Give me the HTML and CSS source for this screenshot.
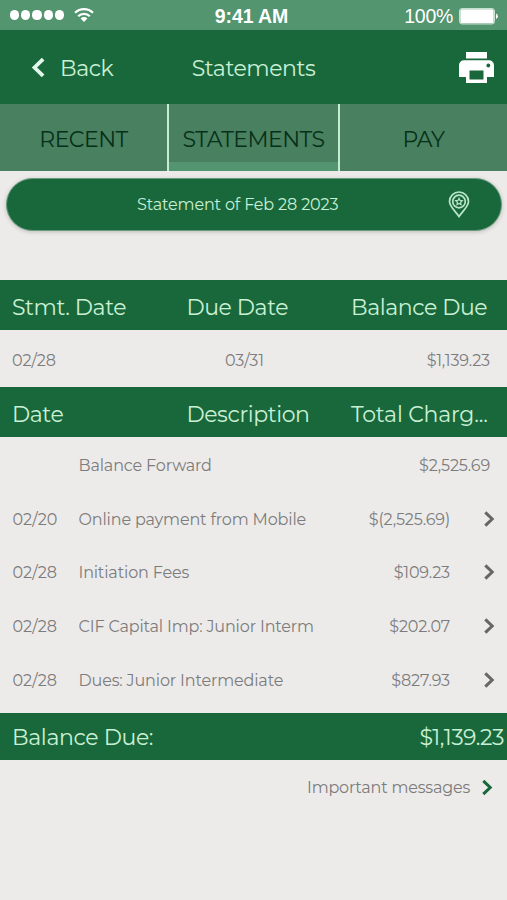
FILE: index.html
```html
<!DOCTYPE html>
<html lang="en">
<head>
<meta charset="utf-8">
<title>Statements</title>
<link rel="stylesheet" href="styles.css">
</head>
<body>
<svg class="defs" width="0" height="0" aria-hidden="true">
  <symbol id="chevron" viewBox="0 0 12 18"><path d="M2.300 2.300 9.200 9l-6.900 6.700" fill="none" stroke="currentColor" stroke-width="3"/></symbol>
</svg>
<div class="status">
  <div class="signal"><i></i><i></i><i></i><i></i><i></i>
    <svg class="wifi" width="20" height="16" viewBox="0 0 20 16"><g fill="none" stroke="#fff" stroke-width="2.200"><path d="M1 5.800a12.800 12.800 0 0 1 18 0"/><path d="M4.200 9.200a8.200 8.200 0 0 1 11.600 0"/></g><path d="M6.600 11.400a4.800 4.800 0 0 1 6.800 0L10 14.900z" fill="#fff"/></svg>
  </div>
  <div class="clock">9:41 AM</div>
  <div class="power"><span>100%</span>
    <svg width="40" height="17" viewBox="0 0 40 17"><rect x=".5" y=".5" width="35" height="15.500" rx="2.500" fill="none" stroke="#c5e2d1"/><rect x="1.300" y="1.300" width="33.400" height="14" rx="1.500" fill="#fff"/><path d="M37 5.500a3 3 0 0 1 0 5.500z" fill="#fff"/></svg>
  </div>
</div>
<header class="nav">
  <div class="back"><svg class="left" width="15" height="23"><use href="#chevron"/></svg><span>Back</span></div>
  <h1>Statements</h1>
  <svg class="print" width="35" height="32" viewBox="0 0 35 32"><path d="M7 0h21v6.500H7z" fill="#fff"/><path d="M5 8.200h25a5 5 0 0 1 5 5V25h-7v6H7v-6H0V13.200a5 5 0 0 1 5-5z" fill="#fff"/><path d="M10.500 18.500h14v9h-14z" fill="#19683b"/><circle cx="29.300" cy="13.500" r="1.900" fill="#19683b"/></svg>
</header>
<nav class="tabs">
  <div class="tab">RECENT</div>
  <div class="tab active">STATEMENTS</div>
  <div class="tab">PAY</div>
</nav>
<main>
  <div class="pill"><span>Statement of Feb 28 2023</span>
    <svg class="pin" width="22" height="27" viewBox="0 0 22 27"><g fill="none" stroke="#b9e5c8" stroke-width="1.700"><path d="M11 25.500C8 21 1.500 15.500 1.500 10.500a9.500 9.500 0 0 1 19 0C20.500 15.500 14 21 11 25.500z"/><circle cx="11" cy="10.500" r="6.300"/><path d="m11 7.300 1 2.100 2.300.3-1.700 1.600.4 2.300-2-1.100-2 1.100.4-2.300-1.700-1.600 2.300-.3z" stroke-width="1.200"/></g></svg>
  </div>
  <section class="head"><span>Stmt. Date</span><span>Due Date</span><span>Balance Due</span></section>
  <section class="summary"><span>02/28</span><span>03/31</span><span>$1,139.23</span></section>
  <section class="head"><span>Date</span><span>Description</span><span class="charges">Total Charg...</span></section>
  <section class="rows">
    <div class="row forward"><span></span><span>Balance Forward</span><span>$2,525.69</span></div>
    <div class="row"><span>02/20</span><span>Online payment from Mobile</span><span>$(2,525.69)</span><svg width="12" height="18"><use href="#chevron"/></svg></div>
    <div class="row"><span>02/28</span><span>Initiation Fees</span><span>$109.23</span><svg width="12" height="18"><use href="#chevron"/></svg></div>
    <div class="row"><span>02/28</span><span>CIF Capital Imp: Junior Interm</span><span>$202.07</span><svg width="12" height="18"><use href="#chevron"/></svg></div>
    <div class="row"><span>02/28</span><span>Dues: Junior Intermediate</span><span>$827.93</span><svg width="12" height="18"><use href="#chevron"/></svg></div>
  </section>
  <section class="total"><span>Balance Due:</span><span class="total-amount">$1,139.23</span></section>
  <div class="messages"><span>Important messages</span><svg width="12" height="18"><use href="#chevron"/></svg></div>
</main>
</body>
</html>
```

FILE: styles.css
```css
* { box-sizing: border-box; }
body { margin: 0; height: 900px; overflow: hidden; background: #edebea; color: #7c7c7c; font: 16px/20px Montserrat, Inter, sans-serif; letter-spacing: -.15px; white-space: nowrap; }
.defs { position: absolute; }
svg { display: block; flex: none; }
.status { height: 30px; padding: 0 12px 0 10px; display: grid; grid-template-columns: 1fr auto 1fr; align-items: center; background: #52956f; color: #fff; font-family: "Liberation Sans", sans-serif; font-size: 19.500px; letter-spacing: 0; }
.signal { display: flex; align-items: center; gap: 2px; }
.signal i { width: 9.200px; height: 9.200px; border-radius: 50%; background: #fff; }
.wifi { margin-left: 8px; }
.clock { font-weight: bold; letter-spacing: -.1px; padding-top: 2px; margin-right: 2px; }
.power { display: flex; justify-content: flex-end; align-items: center; gap: 6px; padding-top: 2px; margin-right: -4px; }
.power span { letter-spacing: -.3px; }
.nav { height: 74px; display: grid; grid-template-columns: 1fr auto 1fr; align-items: center; padding: 3px 13px 0; background: #19683b; color: #c9f0d5; font-size: 22px; line-height: 28px; letter-spacing: -.45px; }
.nav h1 { margin: 0; font: inherit; }
.back { display: flex; align-items: center; gap: 14px; padding-left: 18px; }
.left { transform: translateY(-1px) rotate(180deg); color: #e3f8ea; }
.print { justify-self: end; transform: translateY(-1px); }
.tabs { height: 67px; display: grid; grid-template-columns: 167px 1fr 167px; gap: 2px; background: #c5ecd2; color: #06301a; font-size: 22px; letter-spacing: -.5px; }
.tab { display: flex; align-items: center; justify-content: center; padding-top: 4px; background: #49805f; }
.active { box-shadow: inset 0 -9px #52956f; }
.pill { height: 53px; margin: 7px 5px 49px 6px; border: 1px solid #6a9c80; border-radius: 27px; display: flex; align-items: center; padding-left: 130px; background: #19683b; color: #c9f0d5; box-shadow: 0 1px 4px #0003; }
.pin { margin-left: auto; margin-right: 31px; }
.head { height: 50px; display: grid; grid-template-columns: 174.500px 164.500px 1fr; align-items: center; padding: 5px 0 0 12px; background: #19683b; color: #c9f0d5; font-size: 22px; line-height: 28px; letter-spacing: -.42px; }
.head .charges { letter-spacing: -.2px; }
.summary { height: 57px; display: grid; grid-template-columns: 213px 1fr auto; align-items: center; padding: 4px 17px 0 12px; }
.rows { padding-top: 1px; height: 276px; }
.row { height: 53.700px; display: grid; grid-template-columns: 66px 1fr auto 45px; align-items: center; padding: 2px 12px 0 12.500px; }
.row span:first-child { letter-spacing: 0; }
.row svg { justify-self: end; color: #666; transform: translateY(-1px); }
.forward { grid-template-columns: 66px 1fr auto; padding-right: 17px; }
.total { height: 47px; display: flex; align-items: center; justify-content: space-between; padding: 3px 3px 0 12px; background: #19683b; color: #c9f0d5; font-size: 22px; letter-spacing: -.36px; }
.total-amount { letter-spacing: -.5px; }
.messages { height: 55px; display: flex; align-items: center; justify-content: flex-end; gap: 11px; padding-right: 14px; letter-spacing: -.2px; }
.messages svg { color: #19683b; transform: translateY(-.5px); }
```
